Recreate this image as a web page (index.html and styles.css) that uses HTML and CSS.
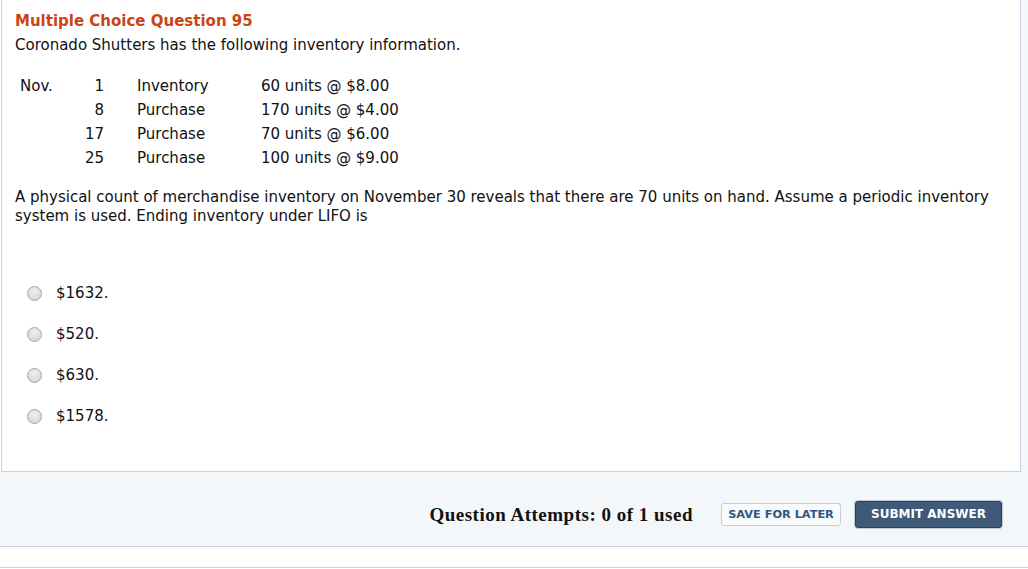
FILE: index.html
```html
<!DOCTYPE html>
<html lang="en">
<head>
    <meta charset="UTF-8">
    <title>Multiple Choice Question 95</title>
    <link rel="stylesheet" href="styles.css">
</head>
<body>
    <div class="top">
        <div class="panel">
            <h2 class="q-title">Multiple Choice Question 95</h2>
            <p class="intro">Coronado Shutters has the following inventory information.</p>

            <table class="inv">
                <tr>
                    <td class="month">Nov.</td>
                    <td class="day">1</td>
                    <td class="desc">Inventory</td>
                    <td class="amt">60 units @ $8.00</td>
                </tr>
                <tr>
                    <td class="month"></td>
                    <td class="day">8</td>
                    <td class="desc">Purchase</td>
                    <td class="amt">170 units @ $4.00</td>
                </tr>
                <tr>
                    <td class="month"></td>
                    <td class="day">17</td>
                    <td class="desc">Purchase</td>
                    <td class="amt">70 units @ $6.00</td>
                </tr>
                <tr>
                    <td class="month"></td>
                    <td class="day">25</td>
                    <td class="desc">Purchase</td>
                    <td class="amt">100 units @ $9.00</td>
                </tr>
            </table>

            <p class="stem">A physical count of merchandise inventory on November 30 reveals that there are 70 units on hand. Assume a periodic inventory system is used. Ending inventory under LIFO is</p>

            <ul class="choices">
                <li><span class="radio"></span>$1632.</li>
                <li><span class="radio"></span>$520.</li>
                <li><span class="radio"></span>$630.</li>
                <li><span class="radio"></span>$1578.</li>
            </ul>
        </div>
    </div>

    <div class="footer">
        <span class="attempts">Question Attempts: 0 of 1 used</span>
        <button class="save-btn">SAVE FOR LATER</button>
        <button class="submit-btn">SUBMIT ANSWER</button>
    </div>

    <div class="below"></div>
</body>
</html>
```

FILE: styles.css
```css
:root {
    --border: #c9d1dc;
    --bg-soft: #f4f7fa;
    --title: #ca4414;
    --text: #111;
}

* {
    margin: 0;
    padding: 0;
    box-sizing: border-box;
}

body {
    font-family: 'DejaVu Sans', Verdana, sans-serif;
    font-size: 15px;
    line-height: 19px;
    color: var(--text);
    background: #fff;
}

.top {
    display: flex;
    background: var(--bg-soft);
    border-left: 1px solid #fff;
}

.panel {
    width: 1020px;
    height: 472px;
    background: #fff;
    border: 1px solid var(--border);
    border-top: none;
    padding: 12px 13px 10px;
}

.q-title {
    color: var(--title);
    font-size: 15px;
    font-weight: bold;
    line-height: 19px;
    margin-bottom: 5px;
}

.inv {
    border-collapse: collapse;
    margin-top: 19px;
}

.inv td {
    height: 24px;
    padding: 0;
    vertical-align: middle;
}

.inv .month {
    width: 62px;
    padding-left: 5px;
}

.inv .day {
    width: 27px;
    text-align: right;
}

.inv .desc {
    width: 157px;
    padding-left: 33px;
}

.stem {
    margin-top: 18px;
    padding-right: 10px;
}

.choices {
    list-style: none;
    margin-top: 57px;
}

.choices li {
    display: flex;
    align-items: center;
    height: 20px;
    margin-bottom: 21px;
    padding-left: 12px;
}

.radio {
    width: 15px;
    height: 15px;
    border-radius: 50%;
    border: 1px solid #a8a8a8;
    background: radial-gradient(circle at 50% 35%, #f0f0f0 0%, #dcdcdc 60%, #cfcfcf 100%);
    margin-right: 14px;
}

.footer {
    height: 75px;
    background: var(--bg-soft);
    border-bottom: 1px solid var(--border);
    display: flex;
    align-items: center;
    justify-content: flex-end;
    padding: 10px 26px 0 0;
}

.attempts {
    font-family: 'Liberation Serif', 'Times New Roman', serif;
    font-weight: bold;
    font-size: 19px;
    letter-spacing: 0.5px;
    margin-right: 28px;
}

.save-btn {
    height: 23px;
    width: 120px;
    background: #f8fafc;
    border: 1px solid #c3cdd8;
    border-radius: 3px;
    color: #2c5784;
    font-family: 'DejaVu Sans', Verdana, sans-serif;
    font-weight: bold;
    font-size: 11.3px;
    margin-right: 14px;
}

.submit-btn {
    height: 27px;
    width: 147px;
    background: #3e5a78;
    border: 1px solid #2b4158;
    border-radius: 3px;
    box-shadow: 0 0 0 1px #c3cbd5;
    color: #fff;
    font-family: 'DejaVu Sans', Verdana, sans-serif;
    font-weight: bold;
    font-size: 12px;
}

.below {
    height: 21px;
    border-bottom: 1px solid var(--border);
}
```
